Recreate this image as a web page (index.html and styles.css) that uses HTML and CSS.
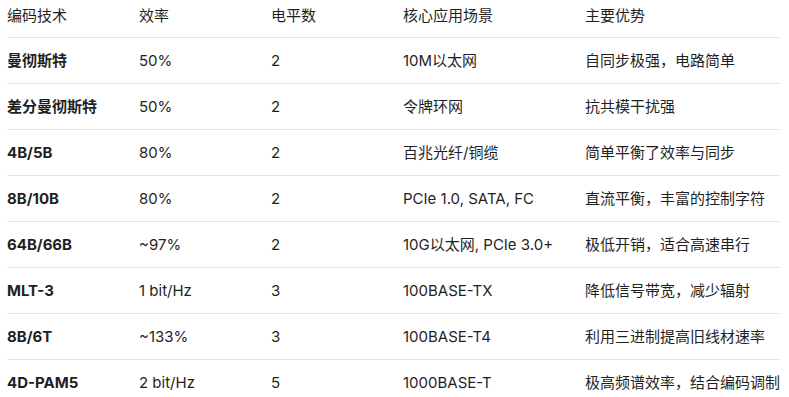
FILE: index.html
```html
<!DOCTYPE html>
<html lang="zh-CN">
<head>
<meta charset="utf-8">
<link rel="stylesheet" href="styles.css">
</head>
<body>
<table class="enc-table">
  <colgroup>
    <col class="c1"><col class="c2"><col class="c3"><col class="c4"><col class="c5">
  </colgroup>
  <thead>
    <tr><th>编码技术</th><th>效率</th><th>电平数</th><th>核心应用场景</th><th>主要优势</th></tr>
  </thead>
  <tbody>
    <tr><td class="name">曼彻斯特</td><td>50%</td><td>2</td><td>10M以太网</td><td>自同步极强，电路简单</td></tr>
    <tr><td class="name">差分曼彻斯特</td><td>50%</td><td>2</td><td>令牌环网</td><td>抗共模干扰强</td></tr>
    <tr><td class="name">4B/5B</td><td>80%</td><td>2</td><td>百兆光纤/铜缆</td><td>简单平衡了效率与同步</td></tr>
    <tr><td class="name">8B/10B</td><td>80%</td><td>2</td><td>PCIe 1.0, SATA, FC</td><td>直流平衡，丰富的控制字符</td></tr>
    <tr><td class="name">64B/66B</td><td>~97%</td><td>2</td><td>10G以太网, PCIe 3.0+</td><td>极低开销，适合高速串行</td></tr>
    <tr><td class="name">MLT-3</td><td>1 bit/Hz</td><td>3</td><td>100BASE-TX</td><td>降低信号带宽，减少辐射</td></tr>
    <tr><td class="name">8B/6T</td><td>~133%</td><td>3</td><td>100BASE-T4</td><td>利用三进制提高旧线材速率</td></tr>
    <tr><td class="name">4D-PAM5</td><td>2 bit/Hz</td><td>5</td><td>1000BASE-T</td><td>极高频谱效率，结合编码调制</td></tr>
  </tbody>
</table>
</body>
</html>
```
FILE: styles.css
```css
html, body {
  margin: 0;
  padding: 0;
  background: #ffffff;
}
body {
  padding: 0 9px 0 7px;
  font-family: Inter, "Noto Sans CJK SC", sans-serif;
  font-size: 15px;
  color: #1f1f1f;
}
.enc-table {
  width: 773px;
  border-collapse: collapse;
  table-layout: fixed;
}
.c1, .c2, .c3 { width: 132px; }
.c4 { width: 182px; }
.c5 { width: 195px; }
.enc-table th {
  font-weight: 400;
  text-align: left;
  padding: 5px 0 10px;
  line-height: 22px;
  border-bottom: 1px solid #e3e3e3;
  white-space: nowrap;
}
.enc-table td {
  padding: 12px 0;
  line-height: 21px;
  border-bottom: 1px solid #e3e3e3;
  white-space: nowrap;
}
.enc-table td.name {
  font-weight: 700;
}
```
